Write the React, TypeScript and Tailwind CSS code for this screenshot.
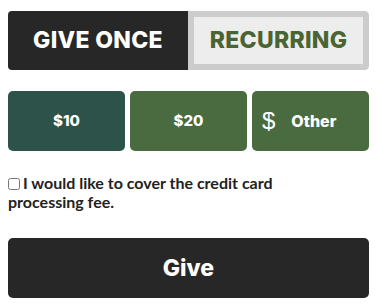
import { useState } from "react";

const headFont = { fontFamily: "Inter, 'Noto Sans', sans-serif" };

export default function App() {
    const [mode, setMode] = useState<"once" | "recurring">("once");
    const [amount, setAmount] = useState<string>("10");
    const [coverFee, setCoverFee] = useState(false);

    return (
        <div className="w-[377px] h-[306px] bg-white px-2 pt-[11px]">
            {/* Frequency toggle */}
            <div className="flex h-[59px] rounded-[4px] overflow-hidden" style={headFont}>
                <button
                    onClick={() => setMode("once")}
                    className="w-[180px] h-full bg-[#272727] text-white text-[23px] font-extrabold tracking-[0.3px] flex items-center justify-center"
                >
                    GIVE ONCE
                </button>
                <button
                    onClick={() => setMode("recurring")}
                    className="flex-1 h-full bg-[#ededed] border-[6px] border-[#cccccc] rounded-r-[4px] text-[#4a6432] text-[23px] font-extrabold tracking-[0.3px] flex items-center justify-center"
                >
                    RECURRING
                </button>
            </div>

            {/* Amounts */}
            <div className="grid grid-cols-3 gap-[5px] mt-[21px]" style={headFont}>
                <button
                    onClick={() => setAmount("10")}
                    className="h-[60px] rounded-[5px] bg-[#2d5249] text-white text-[15px] font-extrabold flex items-center justify-center"
                >
                    $10
                </button>
                <button
                    onClick={() => setAmount("20")}
                    className="h-[60px] rounded-[5px] bg-[#4a6b40] text-white text-[15px] font-extrabold flex items-center justify-center"
                >
                    $20
                </button>
                <button
                    onClick={() => setAmount("other")}
                    className="h-[60px] rounded-[5px] bg-[#4a6b40] text-white flex items-center pl-[10px]"
                >
                    <span className="text-[24px] font-normal leading-none" style={{ fontFamily: "'Liberation Sans', sans-serif" }}>$</span>
                    <span className="text-[16px] font-extrabold ml-[16px]">Other</span>
                </button>
            </div>

            {/* Fee checkbox */}
            <label
                className="block mt-[22px] text-[16px] leading-[19px] font-bold text-[#222222] pr-[60px]"
                style={{ fontFamily: "Lato, sans-serif" }}
            >
                <input
                    type="checkbox"
                    checked={coverFee}
                    onChange={(e) => setCoverFee(e.target.checked)}
                    className="w-[12px] h-[12px] mr-[3px] align-[-1px]"
                />
                I would like to cover the credit card processing fee.
            </label>

            {/* Submit */}
            <button
                className="w-full h-[60px] mt-[27px] rounded-[5px] bg-[#272727] text-white text-[23px] font-extrabold flex items-center justify-center"
                style={headFont}
                data-mode={mode}
                data-amount={amount}
            >
                Give
            </button>
        </div>
    );
}
